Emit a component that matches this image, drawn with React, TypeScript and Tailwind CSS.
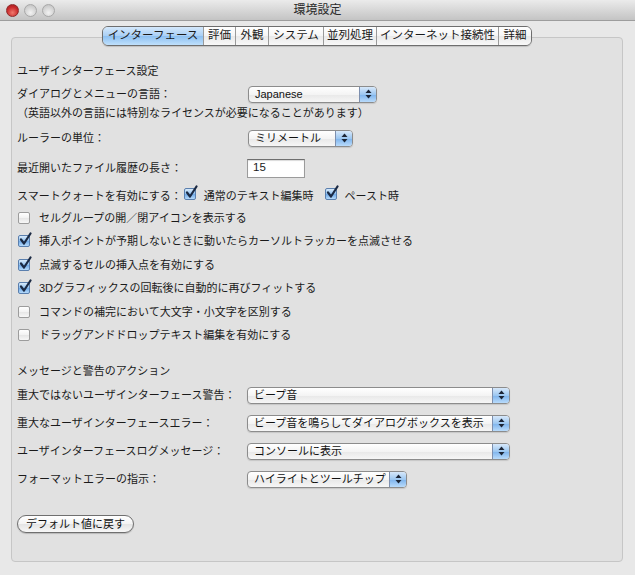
import React from 'react';

const TABS = [
  { label: 'インターフェース', w: 'w-[100px]', selected: true },
  { label: '評価', w: 'w-[32px]' },
  { label: '外観', w: 'w-[33px]' },
  { label: 'システム', w: 'w-[55px]' },
  { label: '並列処理', w: 'w-[53px]' },
  { label: 'インターネット接続性', w: 'w-[122px]' },
  { label: '詳細', w: 'w-[33px]' },
];

const CHECK_ROWS = [
  { label: 'セルグループの開／閉アイコンを表示する', checked: false },
  { label: '挿入ポイントが予期しないときに動いたらカーソルトラッカーを点滅させる', checked: true },
  { label: '点滅するセルの挿入点を有効にする', checked: true },
  { label: '3Dグラフィックスの回転後に自動的に再びフィットする', checked: true },
  { label: 'コマンドの補完において大文字・小文字を区別する', checked: false },
  { label: 'ドラッグアンドドロップテキスト編集を有効にする', checked: false },
];

const ACTION_ROWS = [
  { label: '重大ではないユーザインターフェース警告：', value: 'ビープ音', w: 'w-[263px]' },
  { label: '重大なユーザインターフェースエラー：', value: 'ビープ音を鳴らしてダイアログボックスを表示', w: 'w-[263px]' },
  { label: 'ユーザインターフェースログメッセージ：', value: 'コンソールに表示', w: 'w-[263px]' },
  { label: 'フォーマットエラーの指示：', value: 'ハイライトとツールチップ', w: 'w-[160px]' },
];

// Aqua style checkbox
const Checkbox = ({ checked }: { checked: boolean }) => (
  <span className="relative inline-block w-[12px] h-[12px] shrink-0">
    <span
      className={
        checked
          ? 'absolute inset-0 rounded-[2px] border border-[#5a7fae] bg-[linear-gradient(#d9ebfb,#8fc0ef_50%,#6fa9e8_51%,#b4d9fa)]'
          : 'absolute inset-0 rounded-[2px] border border-[#9c9c9c] bg-[linear-gradient(#ffffff,#f2f2f2_50%,#e6e6e6_51%,#f7f7f7)]'
      }
    />
    {checked && (
      <svg className="absolute left-[1px] top-[-3px]" width="13" height="14" viewBox="0 0 13 14">
        <path d="M2 7.5 L5 11.5 L11.5 1.5" fill="none" stroke="#1b2a44" strokeWidth="2.2" strokeLinecap="round" strokeLinejoin="round" />
      </svg>
    )}
  </span>
);

const Popup = ({ value, className }: { value: string; className: string }) => (
  <div
    className={`${className} flex h-[17px] rounded-[4px] border border-[#8c8c8c] overflow-hidden bg-[linear-gradient(#ffffff,#f4f4f4_50%,#e8e8e8_51%,#f6f6f6)] shadow-[0_1px_1px_rgba(0,0,0,0.12)]`}
  >
    <span className="flex-1 pl-[6px] leading-[15px] text-[11px] text-[#111] truncate">{value}</span>
    <span className="w-[17px] border-l border-[#7d8fae] flex items-center justify-center bg-[linear-gradient(#d7e8fa,#9cc7f1_50%,#7db3ec_51%,#b9dbfb)]">
      <svg width="7" height="10" viewBox="0 0 7 10">
        <path d="M3.5 0.5 L6.5 4 L0.5 4 Z" fill="#1c2536" />
        <path d="M3.5 9.5 L6.5 6 L0.5 6 Z" fill="#1c2536" />
      </svg>
    </span>
  </div>
);

const Light = ({ red }: { red?: boolean }) => (
  <span
    className={
      red
        ? 'w-[13px] h-[13px] rounded-full border border-[#8e2a2a] bg-[radial-gradient(circle_at_50%_70%,#f07a6e,#c8282a_60%,#9c1d1d)]'
        : 'w-[13px] h-[13px] rounded-full border border-[#a8a8a8] bg-[radial-gradient(circle_at_50%_70%,#f2f2f2,#d2d2d2_60%,#bcbcbc)]'
    }
  />
);

export default function App() {
  return (
    <div className="w-[635px] h-[575px] flex flex-col bg-[#e8e8e8] text-[11px] text-[#1a1a1a] font-['Liberation_Sans','Noto_Sans_CJK_JP',sans-serif] overflow-hidden">
      {/* title bar */}
      <div className="relative h-[21px] shrink-0 flex items-center bg-[linear-gradient(#ebebeb,#c4c4c4)] border-b border-[#9d9d9d]">
        <div className="flex items-center gap-[5px] pl-[6px]">
          <Light red />
          <Light />
          <Light />
        </div>
        <span className="absolute left-0 right-0 text-center text-[12px] text-[#2a2a2a] pointer-events-none">環境設定</span>
      </div>

      <div className="flex-1 flex flex-col pt-[5px] pl-[11px] pr-[12px] pb-[13px]">
        {/* tab control */}
        <div className="relative z-10 flex justify-center">
          <div className="flex h-[20px] rounded-[6px] border border-[#6e6e6e] overflow-hidden shadow-[0_1px_1px_rgba(0,0,0,0.15)]">
            {TABS.map((t, i) => (
              <div
                key={t.label}
                className={`${t.w} flex items-center justify-center text-[11.5px] leading-none ${i > 0 ? 'border-l border-[#9a9a9a]' : ''} ${
                  t.selected
                    ? 'bg-[linear-gradient(#d4e8fb,#a9cff5_50%,#8dc0f1_51%,#bfe0fc)]'
                    : 'bg-[linear-gradient(#ffffff,#f5f5f5_50%,#e9e9e9_51%,#f8f8f8)]'
                }`}
              >
                {t.label}
              </div>
            ))}
          </div>
        </div>

        {/* group box */}
        <div className="-mt-[9px] flex-1 rounded-[4px] border border-[#c6c6c6] bg-[#e1e1e1] pl-[5px] pt-[23px]">
          <div className="h-[20px] flex items-center">ユーザインターフェース設定</div>

          <div className="mt-[3px] h-[20px] flex items-center">
            <span className="w-[231px]">ダイアログとメニューの言語：</span>
            <Popup value="Japanese" className="w-[129px]" />
          </div>
          <div className="mt-[1px] h-[16px] flex items-center">（英語以外の言語には特別なライセンスが必要になることがあります）</div>

          <div className="mt-[7px] h-[20px] flex items-center">
            <span className="w-[231px]">ルーラーの単位：</span>
            <Popup value="ミリメートル" className="w-[105px]" />
          </div>

          <div className="mt-[10px] h-[20px] flex items-center">
            <span className="w-[230px]">最近開いたファイル履歴の長さ：</span>
            <div className="w-[58px] h-[19px] bg-white border border-[#9b9b9b] border-t-[#6f6f6f] shadow-[inset_0_1px_1px_rgba(0,0,0,0.15)] pl-[5px] flex items-center text-[11.5px]">
              15
            </div>
          </div>

          <div className="mt-[8px] h-[20px] flex items-center">
            <span>スマートクォートを有効にする：</span>
            <span className="ml-[2px]"><Checkbox checked /></span>
            <span className="ml-[8px]">通常のテキスト編集時</span>
            <span className="ml-[12px]"><Checkbox checked /></span>
            <span className="ml-[7px]">ペースト時</span>
          </div>

          <div>
            {CHECK_ROWS.map(r => (
              <div key={r.label} className="h-[23.5px] flex items-center pl-[1px]">
                <Checkbox checked={r.checked} />
                <span className="ml-[9px]">{r.label}</span>
              </div>
            ))}
          </div>

          <div className="mt-[14px] h-[20px] flex items-center">メッセージと警告のアクション</div>

          {ACTION_ROWS.map(r => (
            <div key={r.label} className="h-[28px] flex items-center">
              <span className="w-[230px]">{r.label}</span>
              <Popup value={r.value} className={r.w} />
            </div>
          ))}

          <div className="mt-[22px] flex">
            <button className="h-[18px] px-[8px] rounded-full border border-[#6f6f6f] bg-[linear-gradient(#ffffff,#f3f3f3_50%,#e4e4e4_51%,#f7f7f7)] shadow-[0_1px_1px_rgba(0,0,0,0.18)] text-[11px] leading-none text-[#111]">
              デフォルト値に戻す
            </button>
          </div>
        </div>
      </div>
    </div>
  );
}
